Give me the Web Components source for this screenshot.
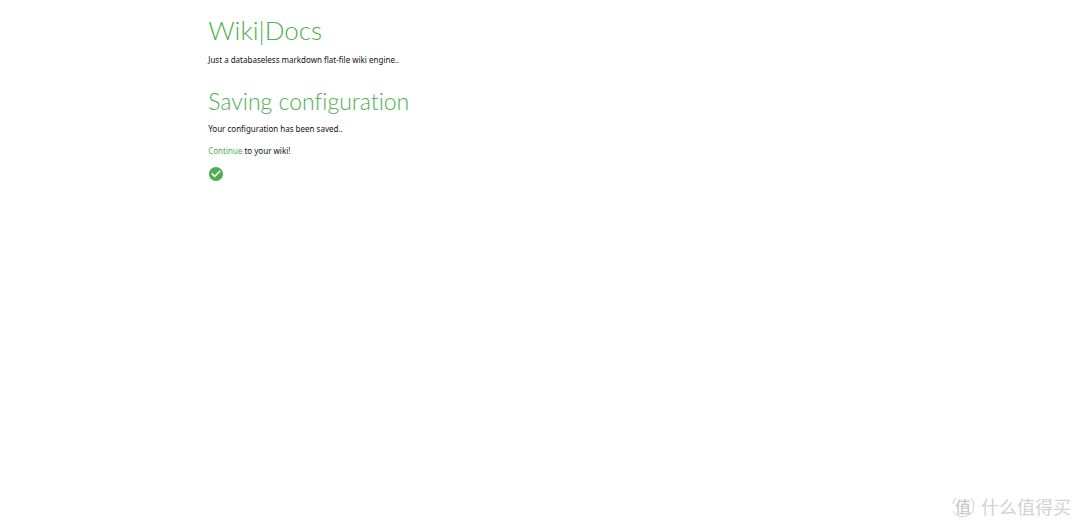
<!DOCTYPE html>
<html lang="en">
<head>
<meta charset="utf-8">
<meta name="viewport" content="width=device-width, initial-scale=1">
<title>Wiki|Docs</title>
<style>
body { margin: 0; background: #fff; color: #111; font: 8px/14px "Noto Sans", "Open Sans", sans-serif; font-variant-ligatures: none; }
</style>
</head>
<body>
<wiki-page>
  <wiki-header slot="header" name="Wiki|Docs">Just a databaseless markdown flat-file wiki engine..</wiki-header>
  <setup-status></setup-status>
  <site-mark slot="mark"></site-mark>
</wiki-page>
<script>
const define = (name, html, setup) => customElements.define(name, class extends HTMLElement {
  constructor() {
    super();
    this.attachShadow({ mode: "open" }).innerHTML = html;
  }
  connectedCallback() { if (setup) setup(this); }
});

define("wiki-page", `
  <style>
    :host { display: flex; flex-direction: column; min-height: 100vh; box-sizing: border-box; }
    .content { flex: 1; width: 62%; margin: 0 auto; padding: 12px 0 0 3px; box-sizing: border-box; display: flex; flex-direction: column; gap: 18px; }
    footer { display: flex; justify-content: flex-end; padding: 0 9px 10px; }
  </style>
  <div class="content"><slot name="header"></slot><main><slot></slot></main></div>
  <footer><slot name="mark"></slot></footer>`);

define("wiki-header", `
  <style>
    :host { display: block; }
    h1 { margin: 0 0 5px; font-family: Lato, "Open Sans", sans-serif; font-size: 26px; line-height: 36px; font-weight: 300; color: #4caf50; }
    p { margin: 0; }
  </style>
  <header><h1></h1><p><slot></slot></p></header>`,
  el => { el.shadowRoot.querySelector("h1").textContent = el.getAttribute("name"); });

define("check-icon", `
  <style>:host { display: block; width: 16px; height: 16px; } svg { display: block; }</style>
  <svg width="16" height="16" viewBox="0 0 24 24" role="img" aria-label="Done"><path fill="#4caf50" d="M12 1.5C6.2 1.5 1.5 6.2 1.5 12S6.2 22.500 12 22.500 22.500 17.800 22.500 12 17.800 1.500 12 1.500zM10 17.300l-5.300-5.300 1.700-1.700L10 13.900l7.600-7.600 1.700 1.700L10 17.300z"/></svg>`);

define("setup-status", `
  <style>
    :host { display: block; }
    h2 { margin: 0 0 5px; font-family: Lato, "Open Sans", sans-serif; font-size: 23px; line-height: 32px; font-weight: 300; color: #4caf50; }
    p { margin: 0 0 8px; }
    a { color: #4caf50; text-decoration: none; }
  </style>
  <h2>Saving configuration</h2>
  <p>Your configuration has been saved..</p>
  <p><a href="#">Continue</a> to your wiki!</p>
  <check-icon></check-icon>`);

define("site-mark", `
  <style>
    :host { display: flex; align-items: center; gap: 6px; color: #d2d2d2; font: 18px/24px "Noto Sans CJK SC", sans-serif; }
    .badge { display: grid; place-items: center; position: relative; width: 24px; height: 24px; font-size: 16px; line-height: 20px; font-weight: 500; color: #c8c8c8; }
    svg { position: absolute; inset: 0; }
  </style>
  <span class="badge" lang="zh">值<svg width="24" height="24" viewBox="0 0 24 24" fill="none" stroke="#cecece" aria-hidden="true"><path d="M2 17C5 24 16 25 21 18C24 13 23 7 20 4M2 10Q2 6 5 4"/></svg></span>
  <span lang="zh">什么值得买</span>`);
</script>
</body>
</html>
